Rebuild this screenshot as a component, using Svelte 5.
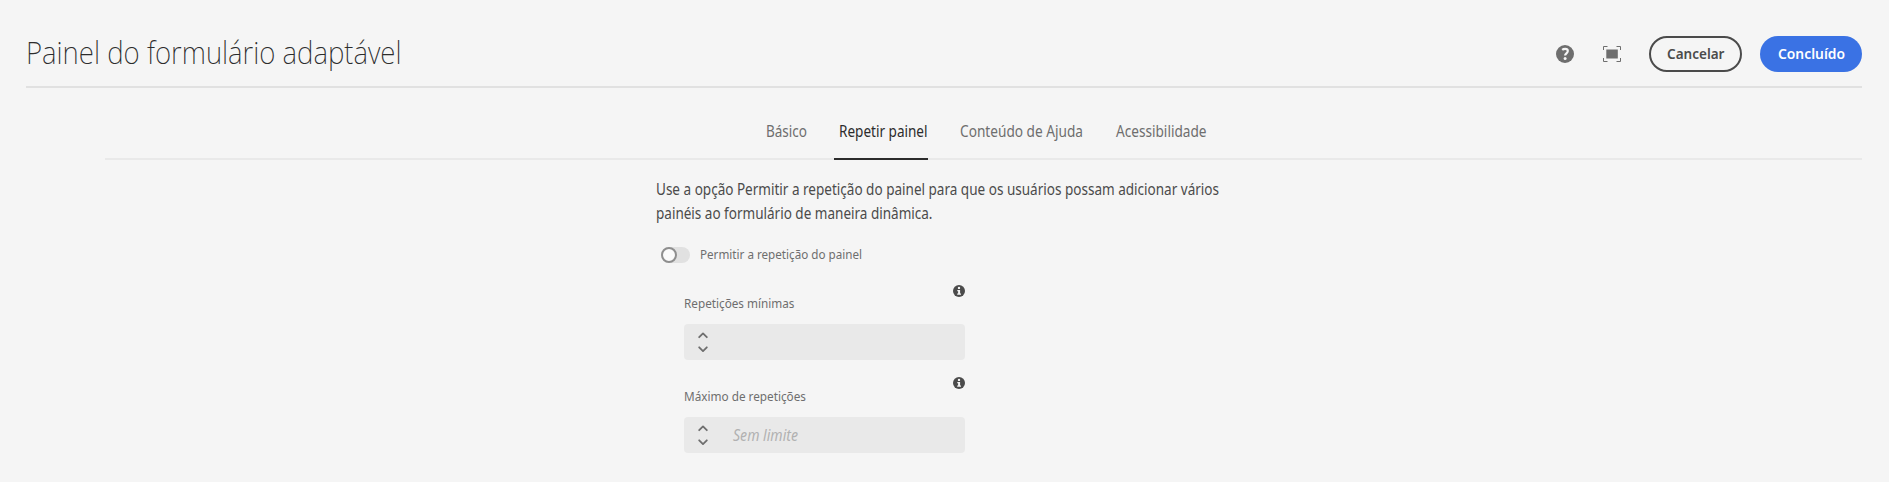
<script>
  const tabs = [
    { label: 'Básico', width: 41 },
    { label: 'Repetir painel', width: 88.5, active: true },
    { label: 'Conteúdo de Ajuda', width: 123 },
    { label: 'Acessibilidade', width: 90.5 },
  ];
  const fields = [
    { label: 'Repetições mínimas', width: 110.5, hint: '' },
    { label: 'Máximo de repetições', width: 122, hint: 'Sem limite' },
  ];
</script>

{#snippet line(text, width, size)}
  <svg class="line" {width} height="24" style:font-size="{size}px">
    <text x="0" y="18" textLength={width} lengthAdjust="spacingAndGlyphs">{text}</text>
  </svg>
{/snippet}

<main>
  <header>
    <h1>{@render line('Painel do formulário adaptável', 375.5, 30.5)}</h1>
    <div class="actions">
      <svg class="help" width="18" height="18" viewBox="0 0 18 18">
        <circle cx="9" cy="9" r="9" fill="#6e6e6e" />
        <path d="M6.2 4.900C7.1 4.100 8.2 3.900 9.200 3.900c1.700 0 2.600.9 2.600 2.200 0 2.200-2.700 2.300-2.700 4.500" fill="none" stroke="#f5f5f5" stroke-width="2.200" />
        <circle cx="9.100" cy="13.500" r="1.500" fill="#f5f5f5" />
      </svg>
      <svg class="full" width="18" height="16" viewBox="0 0 18 16">
        <path d="M.5 4V.5h4M13.500 .5h4V4M17.500 12v3.500h-4M4.500 15.500h-4V12" fill="none" stroke="#6e6e6e" />
        <rect x="3.300" y="3.500" width="11.500" height="9" fill="#6e6e6e" />
      </svg>
      <button class="cancel">{@render line('Cancelar', 57.5, 15)}</button>
      <button class="done">{@render line('Concluído', 67, 15)}</button>
    </div>
  </header>

  <nav>
    {#each tabs as tab}
      <div class="tab" class:active={tab.active}>{@render line(tab.label, tab.width, 15.5)}</div>
    {/each}
  </nav>

  <section>
    <div class="desc">
      {@render line('Use a opção Permitir a repetição do painel para que os usuários possam adicionar vários', 563, 15.5)}
      {@render line('painéis ao formulário de maneira dinâmica.', 276.5, 15.5)}
    </div>
    <label class="toggle">
      <span class="track"><span class="knob"></span></span>
      {@render line('Permitir a repetição do painel', 162, 13.2)}
    </label>
    {#each fields as field}
      <div class="field">
        <svg class="info" width="12" height="12" viewBox="0 0 12 12">
          <circle cx="6" cy="6" r="6" fill="#4b4b4b" />
          <circle cx="6" cy="2.900" r="1.200" fill="#f5f5f5" />
          <path d="M4.300 4.900H7.100v3.600h.9v1.300H4.200V8.500h.9V6.200h-.8z" fill="#f5f5f5" />
        </svg>
        <div class="label">{@render line(field.label, field.width, 13.2)}</div>
        <div class="input">
          <svg class="stepper" width="10" height="20" viewBox="0 0 10 20">
            <path d="M1.200 5.200 5 1.400l3.800 3.800M1.200 15.300 5 19.100l3.800-3.800" fill="none" stroke="#6e6e6e" stroke-width="1.800" stroke-linecap="round" stroke-linejoin="round" />
          </svg>
          {#if field.hint}<span class="hint">{@render line(field.hint, 65, 15.5)}</span>{/if}
        </div>
      </div>
    {/each}
  </section>
</main>

<style>
  :global(body) { background: #f5f5f5; }
  main {
    box-sizing: border-box;
    height: 482px;
    padding: 0 27px 0 26px;
    overflow: hidden;
    font-family: "Noto Sans", sans-serif;
    color: #4b4b4b;
  }
  .line { display: block; flex: none; overflow: visible; fill: currentColor; }
  header {
    box-sizing: border-box;
    height: 88px;
    border-bottom: 2px solid #e1e1e1;
    display: flex;
    justify-content: space-between;
  }
  h1 { margin: 46px 0 0; font-weight: 200; color: #2c2c2c; }
  .actions { display: flex; align-items: center; height: 36px; margin-top: 36px; }
  .full { margin: 0 28px 0 29px; }
  button {
    box-sizing: border-box;
    height: 36px;
    padding: 0 0 3px;
    border-radius: 18px;
    font-family: inherit;
    font-weight: 600;
    display: flex;
    align-items: center;
    justify-content: center;
  }
  .cancel { width: 93px; border: 2px solid #4b4b4b; background: transparent; color: #4b4b4b; }
  .done { width: 102px; margin-left: 18px; border: 0; background: #3a72e4; color: #fff; }
  nav {
    box-sizing: border-box;
    height: 72px;
    margin-left: 79px;
    padding: 31px 0 0 660.5px;
    border-bottom: 2px solid #e9e9e9;
    display: flex;
    gap: 27px;
    color: #6e6e6e;
  }
  .tab { height: 39px; padding-left: 5.5px; border-bottom: 2px solid transparent; flex: none; }
  .tab:first-child { padding-left: 0; }
  .tab.active { color: #2c2c2c; border-color: #2c2c2c; }
  section { margin-left: 629.5px; padding-top: 17px; }
  .toggle { display: flex; align-items: center; height: 24px; margin: 16px 0 0 5.5px; color: #6e6e6e; }
  .track { width: 29px; height: 16px; margin: 4px 10px 0 0; border-radius: 8px; background: #e1e1e1; display: flex; align-items: center; }
  .knob { box-sizing: border-box; width: 16px; height: 16px; border: 2px solid #8e8e8e; border-radius: 50%; background: #fafafa; }
  .field { width: 281px; margin: 20px 0 0 28.5px; display: flex; flex-direction: column; }
  .field + .field { margin-top: 17px; }
  .info { align-self: flex-end; }
  .label { margin: -7px 0 0; color: #6e6e6e; }
  .field + .field .label { margin-top: -6px; }
  .input { height: 36px; margin-top: 10px; border-radius: 4px; background: #e9e9e9; display: flex; align-items: center; }
  .stepper { margin-left: 14px; }
  .hint { margin: 0 0 1px 25px; color: #b1b1b1; font-style: italic; }
</style>
